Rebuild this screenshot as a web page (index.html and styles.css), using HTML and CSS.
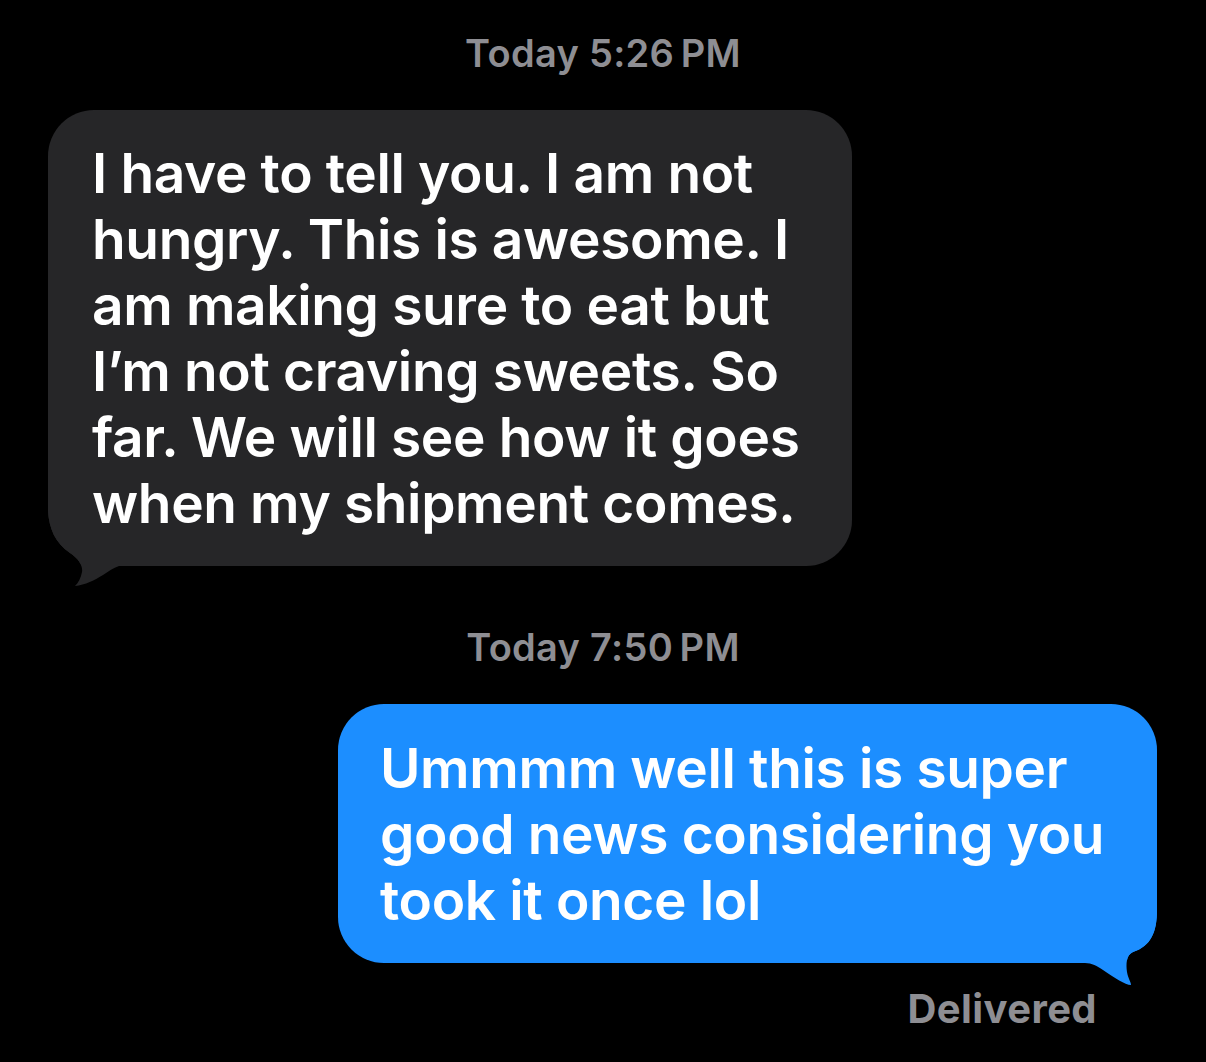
FILE: index.html
```html
<!DOCTYPE html>
<html>
<head>
<meta charset="utf-8">
<link rel="stylesheet" href="styles.css">
</head>
<body>
<div class="thread">
  <div class="stamp">Today 5:26&#8201;PM</div>
  <div class="row row-in">
    <div class="bubble bubble-in">
      <svg class="tail tail-in" width="80" height="95" viewBox="0 0 80 95"><path d="M0 0 H3 V13 C4 30 10 45 25 55 C34 61 38 68 37 74 C36 80 33 85 30 88 C40 87 50 82 58 77 C64 73 68 70 74 68 H80 V95 H0 Z" fill="#000"/><path d="M3 0 V13 C4 30 10 45 25 55 C34 61 38 68 37 74 C36 80 33 85 30 88 C40 87 50 82 58 77 C64 73 68 70 74 68 H80 V0 Z" fill="#262628"/></svg>
      <span class="bubble-text">I have to tell you. I am not<br>hungry. This is awesome. I<br>am making sure to eat but<br>I’m not craving sweets. So<br>far. We will see how it goes<br>when my shipment comes.</span>
    </div>
  </div>
  <div class="stamp stamp-second">Today 7:50&#8201;PM</div>
  <div class="row row-out">
    <div class="bubble bubble-out">
      <svg class="tail tail-out" width="75" height="90" viewBox="0 0 75 90"><path d="M72 0 H75 V90 H0 V63 C7 63 12 66 18 70 C30 78 40 85 46 85 C46 82 43 78 42 72 C41 64 41 55 48 52 C66 46 72 32 72 10 Z" fill="#000"/><path d="M0 0 H72 V10 C72 32 66 46 48 52 C41 55 41 64 42 72 C43 78 46 82 46 85 C40 85 30 78 18 70 C12 66 7 63 0 63 Z" fill="#1c8eff"/></svg>
      <span class="bubble-text">Ummmm well this is super<br>good news considering you<br>took it once lol</span>
    </div>
  </div>
  <div class="status">Delivered</div>
</div>
</body>
</html>
```
FILE: styles.css
```css
html, body {
  margin: 0;
  padding: 0;
  background: #000;
}
body {
  width: 1206px;
  height: 1062px;
  overflow: hidden;
  font-family: "Inter", "Liberation Sans", sans-serif;
}
.thread {
  display: flex;
  flex-direction: column;
  padding-top: 31px;
}
.stamp {
  text-align: center;
  color: #8e8e93;
  font-size: 38px;
  line-height: 44px;
  font-weight: 600;
  letter-spacing: 0.3px;
}
.stamp-second {
  margin-top: 59px;
}
.row {
  display: flex;
}
.row-in {
  margin-top: 35px;
  padding-left: 48px;
}
.row-out {
  margin-top: 35px;
  justify-content: flex-end;
  padding-right: 49px;
}
.bubble {
  position: relative;
  box-sizing: border-box;
  font-size: 55px;
  line-height: 66px;
  font-weight: 600;
  color: #fff;
  padding: 30px 44px;
  border-radius: 46px;
  letter-spacing: -0.35px;
}
.bubble-text {
  position: relative;
  z-index: 1;
}
.bubble-in {
  width: 804px;
  background: #262628;
}
.bubble-out {
  width: 819px;
  padding: 31px 43px 30px 42px;
  background: #1c8eff;
}
.tail {
  position: absolute;
  display: block;
  z-index: 0;
}
.tail-in {
  left: -3px;
  bottom: -27px;
}
.tail-out {
  right: -3px;
  bottom: -27px;
}
.status {
  margin-top: 24px;
  text-align: right;
  padding-right: 109px;
  color: #8e8e93;
  font-size: 40px;
  line-height: 44px;
  font-weight: 700;
  letter-spacing: 0.4px;
}
```
